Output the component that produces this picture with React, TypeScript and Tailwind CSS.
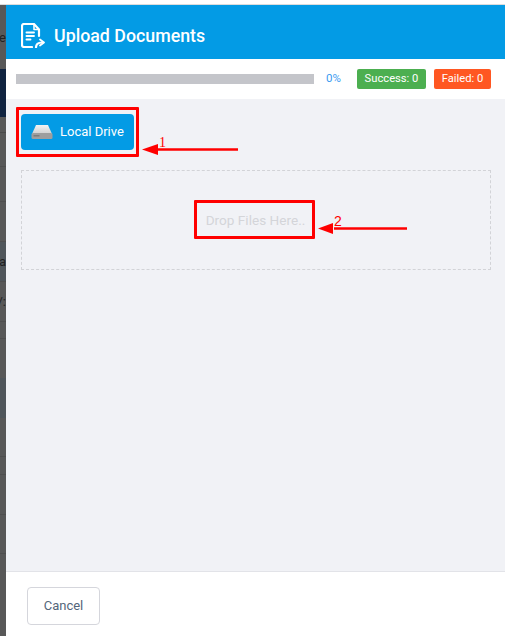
import React from "react";

function Strip() {
  return (
    <div className="w-[6px] shrink-0 flex flex-col overflow-hidden bg-[#585858] text-[#222] text-[13px] leading-none [font-family:Roboto,sans-serif]">
      <div className="h-[64px] shrink-0 flex items-center justify-end"><span className="whitespace-nowrap">e</span></div>
      <div className="h-[48px] shrink-0 bg-[#102340]" />
      <div className="h-[16px] shrink-0 border-b border-[#4a4a4a]" />
      <div className="h-[34px] shrink-0 border-b border-[#4f4f4f]" />
      <div className="h-[35px] shrink-0 border-b border-[#4f4f4f]" />
      <div className="h-[40px] shrink-0 border-b border-[#4f4f4f]" />
      <div className="h-[40px] shrink-0 border-b border-[#4f4f4f] bg-[#50565b] flex items-center justify-end"><span>a</span></div>
      <div className="h-[40px] shrink-0 border-b border-[#4f4f4f] flex items-center justify-end"><span className="whitespace-nowrap">/:</span></div>
      <div className="h-[17px] shrink-0 border-b border-[#4f4f4f]" />
      <div className="h-[39px] shrink-0" />
      <div className="h-[40px] shrink-0 bg-[#50565b]" />
      <div className="h-[39px] shrink-0 border-b border-[#4f4f4f]" />
      <div className="h-[18px] shrink-0 border-b border-[#4f4f4f]" />
      <div className="h-[40px] shrink-0 border-b border-[#4f4f4f]" />
      <div className="h-[39px] shrink-0 border-b border-[#4f4f4f]" />
      <div className="flex-1" />
    </div>
  );
}

function Annotations() {
  return (
    <>
      <div className="absolute left-[16px] top-[107px] w-[123px] h-[50px] border-[3px] border-[#ff0000] rounded-[1px]" />
      <div className="absolute left-[194px] top-[200px] w-[121px] h-[39px] border-[3px] border-[#ff0000] rounded-[1px]" />
      <svg className="absolute left-0 top-0 pointer-events-none" width="505" height="636" viewBox="0 0 505 636">
        <path d="M238 149.500H158" stroke="#ff0000" strokeWidth="2.500" />
        <path d="M142 149.500L158 144V155Z" fill="#ff0000" />
        <path d="M407 228.500H334" stroke="#ff0000" strokeWidth="2.500" />
        <path d="M318 228.500L333 223V234Z" fill="#ff0000" />
      </svg>
      <span className="absolute left-[159px] top-[135px] text-[14px] leading-[16px] text-[#ff0000] [font-family:'Liberation_Serif',serif]">1</span>
      <span className="absolute left-[334px] top-[213px] text-[14px] leading-[16px] text-[#ff0000] [font-family:'Liberation_Sans',sans-serif]">2</span>
    </>
  );
}

export default function App() {
  return (
    <div className="relative w-[505px] h-[636px] overflow-hidden bg-white flex flex-col [font-family:Roboto,sans-serif]">
      <div className="h-[4px] shrink-0 bg-white" />
      <div className="h-[1px] shrink-0 bg-[#dcdcdc]" />
      <div className="flex-1 flex min-h-0">
        <Strip />
        <div className="flex-1 flex flex-col min-w-0">
          <header className="h-[54px] shrink-0 bg-[#039be5] flex items-center pl-[15px] pt-[7px] gap-[9px] text-white">
            <svg width="24" height="25" viewBox="0 0 24 25" fill="none" stroke="#fff" strokeWidth="2.200" strokeLinecap="round" strokeLinejoin="round">
              <path d="M11 24H3a2 2 0 0 1-2-2V3a2 2 0 0 1 2-2h10l5 5.500V13" />
              <path d="M13 1.500V6.500H18" strokeWidth="1.600" />
              <path d="M5.500 9.500h7.500M5.500 13h7.500M5.500 16.500h4" strokeWidth="1.900" />
              <path d="M15 24.500c0-3 2-5 6-5" />
              <path d="M19 16.500l4 3-4 3" strokeWidth="1.800" />
            </svg>
            <h1 className="text-[17.800px] leading-none font-medium">Upload Documents</h1>
          </header>
          <div className="h-[40px] shrink-0 bg-white flex items-center pl-[10px] pr-[14px]">
            <div className="w-[298px] h-[10px] bg-[#c4c5ca]" />
            <span className="ml-[12px] w-[31px] text-[11.500px] text-[#3b9bf0]">0%</span>
            <span className="h-[20px] w-[69px] rounded-[2px] bg-[#4caf50] text-white text-[11.200px] flex items-center justify-center">Success: 0</span>
            <span className="ml-[8px] h-[20px] w-[57px] rounded-[2px] bg-[#ff5722] text-white text-[11.200px] flex items-center justify-center">Failed: 0</span>
          </div>
          <main className="flex-1 min-h-0 bg-[#f1f2f6] pt-[15px] px-[15px] border-b border-[#e2e3e8]">
            <button className="w-[113px] h-[36px] rounded-[4px] bg-[#039be5] text-white flex items-center pl-[10px] gap-[7px] text-[13px]">
              <svg width="22" height="16" viewBox="0 0 22 16">
                <defs>
                  <linearGradient id="hd" x1="0" y1="0" x2="0" y2="1">
                    <stop offset="0" stopColor="#f4f4f4" />
                    <stop offset="1" stopColor="#cfcfcf" />
                  </linearGradient>
                </defs>
                <path d="M5 1h12l4 9H1Z" fill="url(#hd)" />
                <rect x="0.500" y="9" width="21" height="6" rx="1.500" fill="#9e9e9e" />
                <rect x="2.500" y="11" width="6" height="1.500" fill="#7c7c7c" />
              </svg>
              Local Drive
            </button>
            <div className="mt-[20px] h-[100px] w-[470px] border border-dashed border-[#d2d3d7] flex items-center justify-center pr-[1px] text-[13.600px] text-[#d4d5d9]">
              Drop Files Here..
            </div>
          </main>
          <footer className="h-[64px] shrink-0 bg-white pt-[15px] pl-[21px]">
            <button className="w-[73px] h-[38px] rounded-[4px] border border-[#d5d6dc] bg-white text-[13px] text-[#54667a]">Cancel</button>
          </footer>
        </div>
      </div>
      <Annotations />
    </div>
  );
}
